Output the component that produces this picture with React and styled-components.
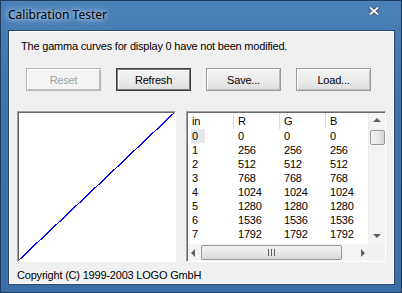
import styled, { createGlobalStyle } from "styled-components";

const Global = createGlobalStyle`
  html, body { margin: 0; padding: 0; background: #3d70a8; }
  * { box-sizing: border-box; }
`;

const Win = styled.div`
  width: 402px;
  height: 293px;
  background: linear-gradient(180deg, #4b80b9 0%, #3c71aa 40%, #3a6ea6 100%);
  border: 1px solid #1d3a5c;
  display: flex;
  flex-direction: column;
  padding: 0 6px 7px 7px;
`;

const TitleBar = styled.div`
  height: 29px;
  display: flex;
  align-items: center;
  justify-content: space-between;
  padding: 0 15px 3px 0;
`;

const Title = styled.div`
  font-family: "Noto Sans", "Open Sans", sans-serif;
  font-size: 12px;
  color: #000;
  text-shadow: 0 0 8px #cfe2f5, 0 0 4px #cfe2f5;
`;

const Client = styled.div`
  flex: 1;
  background: #f0f0f0;
  border: 1px solid #26496f;
  box-shadow: inset 0 0 0 1px #fff;
  padding: 6px 8px 0 8px;
  font-family: "Liberation Sans", Arial, sans-serif;
  font-size: 11px;
  letter-spacing: -0.2px;
  color: #000;
  display: flex;
  flex-direction: column;
`;

const Message = styled.div`
  padding-left: 4px;
  height: 18px;
  line-height: 18px;
`;

const ButtonRow = styled.div`
  display: flex;
  gap: 15px;
  padding: 13px 0 0 9px;
`;

const Button = styled.button`
  width: 75px;
  height: 23px;
  font-family: "Liberation Sans", Arial, sans-serif;
  font-size: 11px;
  letter-spacing: -0.2px;
  padding: 0;
  background: linear-gradient(180deg, #f4f4f4 0%, #ececec 50%, #dedede 100%);
  color: ${p => (p.disabled ? "#a0a0a0" : "#000")};
  border: 1px solid ${p => (p.$def ? "#3c3c3c" : "#9a9a9a")};
  box-shadow: ${p =>
    p.$def ? "inset 0 0 0 1px #7a7a7a, inset 1px 1px 0 1px #fff" : "inset 1px 1px 0 #fff, inset -1px -1px 0 #bdbdbd"};
  ${p => p.disabled && "background: #f4f4f4; border-color: #b5b5b5;"}
`;

const Content = styled.div`
  display: flex;
  gap: 10px;
  margin-top: 20px;
  height: 151px;
`;

const Graph = styled.div`
  width: 159px;
  height: 151px;
  background: #fff;
  border: 1px solid #a0a0a0;
  border-right-color: #fff;
  border-bottom-color: #fff;
  box-shadow: inset 1px 1px 0 #696969;
  svg { display: block; }
`;

const List = styled.div`
  width: 201px;
  height: 151px;
  border: 1px solid #a0a0a0;
  border-right-color: #fff;
  border-bottom-color: #fff;
  box-shadow: inset 1px 1px 0 #696969;
  padding: 1px 0 0 1px;
  background: #fff;
  display: grid;
  grid-template-columns: 1fr 17px;
  grid-template-rows: 1fr 17px;
`;

const Table = styled.div`
  overflow: hidden;
`;

const Row = styled.div`
  display: grid;
  grid-template-columns: 46px 46px 46px 46px;
  height: ${p => (p.$head ? "16px" : "14px")};
  line-height: ${p => (p.$head ? "16px" : "14px")};
  ${p => p.$head && "border-bottom: 1px solid #e5e5e5;"}
`;

const HeadCell = styled.div`
  padding-left: 4px;
  border-right: 1px solid #dcdcdc;
  background: #fff;
`;

const Cell = styled.div`
  padding-left: 3px;
  span {
    display: inline-block;
    padding: 0 ${p => (p.$sel ? "7px" : "0")} 0 1px;
    background: ${p => (p.$sel ? "#e8e8e8" : "transparent")};
  }
`;

const VScroll = styled.div`
  background: #f3f3f3;
  border-left: 1px solid #ececec;
  display: flex;
  flex-direction: column;
  align-items: center;
  padding-top: 5px;
`;

const HScroll = styled.div`
  background: #f3f3f3;
  display: flex;
  align-items: center;
  padding: 0 3px;
`;

const Corner = styled.div`
  background: #f0f0f0;
`;

const Arrow = styled.div`
  width: 0;
  height: 0;
  border: 4px solid transparent;
  ${p => p.$dir === "up" && "border-bottom: 4px solid #606060; border-top-width: 0;"}
  ${p => p.$dir === "down" && "border-top: 4px solid #606060; border-bottom-width: 0;"}
  ${p => p.$dir === "left" && "border-right: 4px solid #606060; border-left-width: 0;"}
  ${p => p.$dir === "right" && "border-left: 4px solid #606060; border-right-width: 0;"}
`;

const VThumb = styled.div`
  width: 15px;
  height: 15px;
  margin-top: 8px;
  border: 1px solid #979797;
  border-radius: 2px;
  background: linear-gradient(90deg, #f3f3f3, #e5e5e5 60%, #d6d6d6);
`;

const HThumb = styled.div`
  width: 141px;
  height: 15px;
  margin-left: 6px;
  border: 1px solid #979797;
  border-radius: 2px;
  background: linear-gradient(180deg, #f3f3f3, #e5e5e5 60%, #d6d6d6);
  display: flex;
  align-items: center;
  justify-content: center;
  gap: 2px;
  i {
    width: 1px;
    height: 7px;
    background: #606060;
  }
`;

const Spacer = styled.div`
  flex: 1;
`;

const Footer = styled.div`
  padding-top: 7px;
  height: 22px;
`;

const CloseX = styled.svg`
  display: block;
  align-self: flex-start;
  margin-top: 5px;
`;

const rows = [0, 1, 2, 3, 4, 5, 6, 7];

export default function App() {
  return (
    <>
      <Global />
      <Win>
        <TitleBar>
          <Title>Calibration Tester</Title>
          <CloseX width="12" height="10" viewBox="0 0 12 10">
            <path d="M2 1.5 L10 8.5 M10 1.5 L2 8.5" stroke="#34465c" strokeWidth="3.6" />
            <path d="M2 1.5 L10 8.5 M10 1.5 L2 8.5" stroke="#fff" strokeWidth="1.8" />
          </CloseX>
        </TitleBar>
        <Client>
          <Message>The gamma curves for display 0 have not been modified.</Message>
          <ButtonRow>
            <Button disabled>Reset</Button>
            <Button $def>Refresh</Button>
            <Button>Save...</Button>
            <Button>Load...</Button>
          </ButtonRow>
          <Content>
            <Graph>
              <svg width="157" height="149" viewBox="0 0 157 149" shapeRendering="crispEdges">
                <line x1="1" y1="148" x2="156" y2="1" stroke="#0000ff" strokeWidth="1.3" />
              </svg>
            </Graph>
            <List>
              <Table>
                <Row $head>
                  <HeadCell>in</HeadCell>
                  <HeadCell>R</HeadCell>
                  <HeadCell>G</HeadCell>
                  <HeadCell>B</HeadCell>
                </Row>
                {rows.map(i => (
                  <Row key={i}>
                    <Cell $sel={i === 0}><span>{i}</span></Cell>
                    <Cell><span>{i * 256}</span></Cell>
                    <Cell><span>{i * 256}</span></Cell>
                    <Cell><span>{i * 256}</span></Cell>
                  </Row>
                ))}
              </Table>
              <VScroll>
                <Arrow $dir="up" />
                <VThumb />
                <Spacer />
                <Arrow $dir="down" />
                <div style={{ height: 6 }} />
              </VScroll>
              <HScroll>
                <Arrow $dir="left" />
                <HThumb><i /><i /><i /></HThumb>
                <Spacer />
                <Arrow $dir="right" />
              </HScroll>
              <Corner />
            </List>
          </Content>
          <Footer>Copyright (C) 1999-2003 LOGO GmbH</Footer>
        </Client>
      </Win>
    </>
  );
}
